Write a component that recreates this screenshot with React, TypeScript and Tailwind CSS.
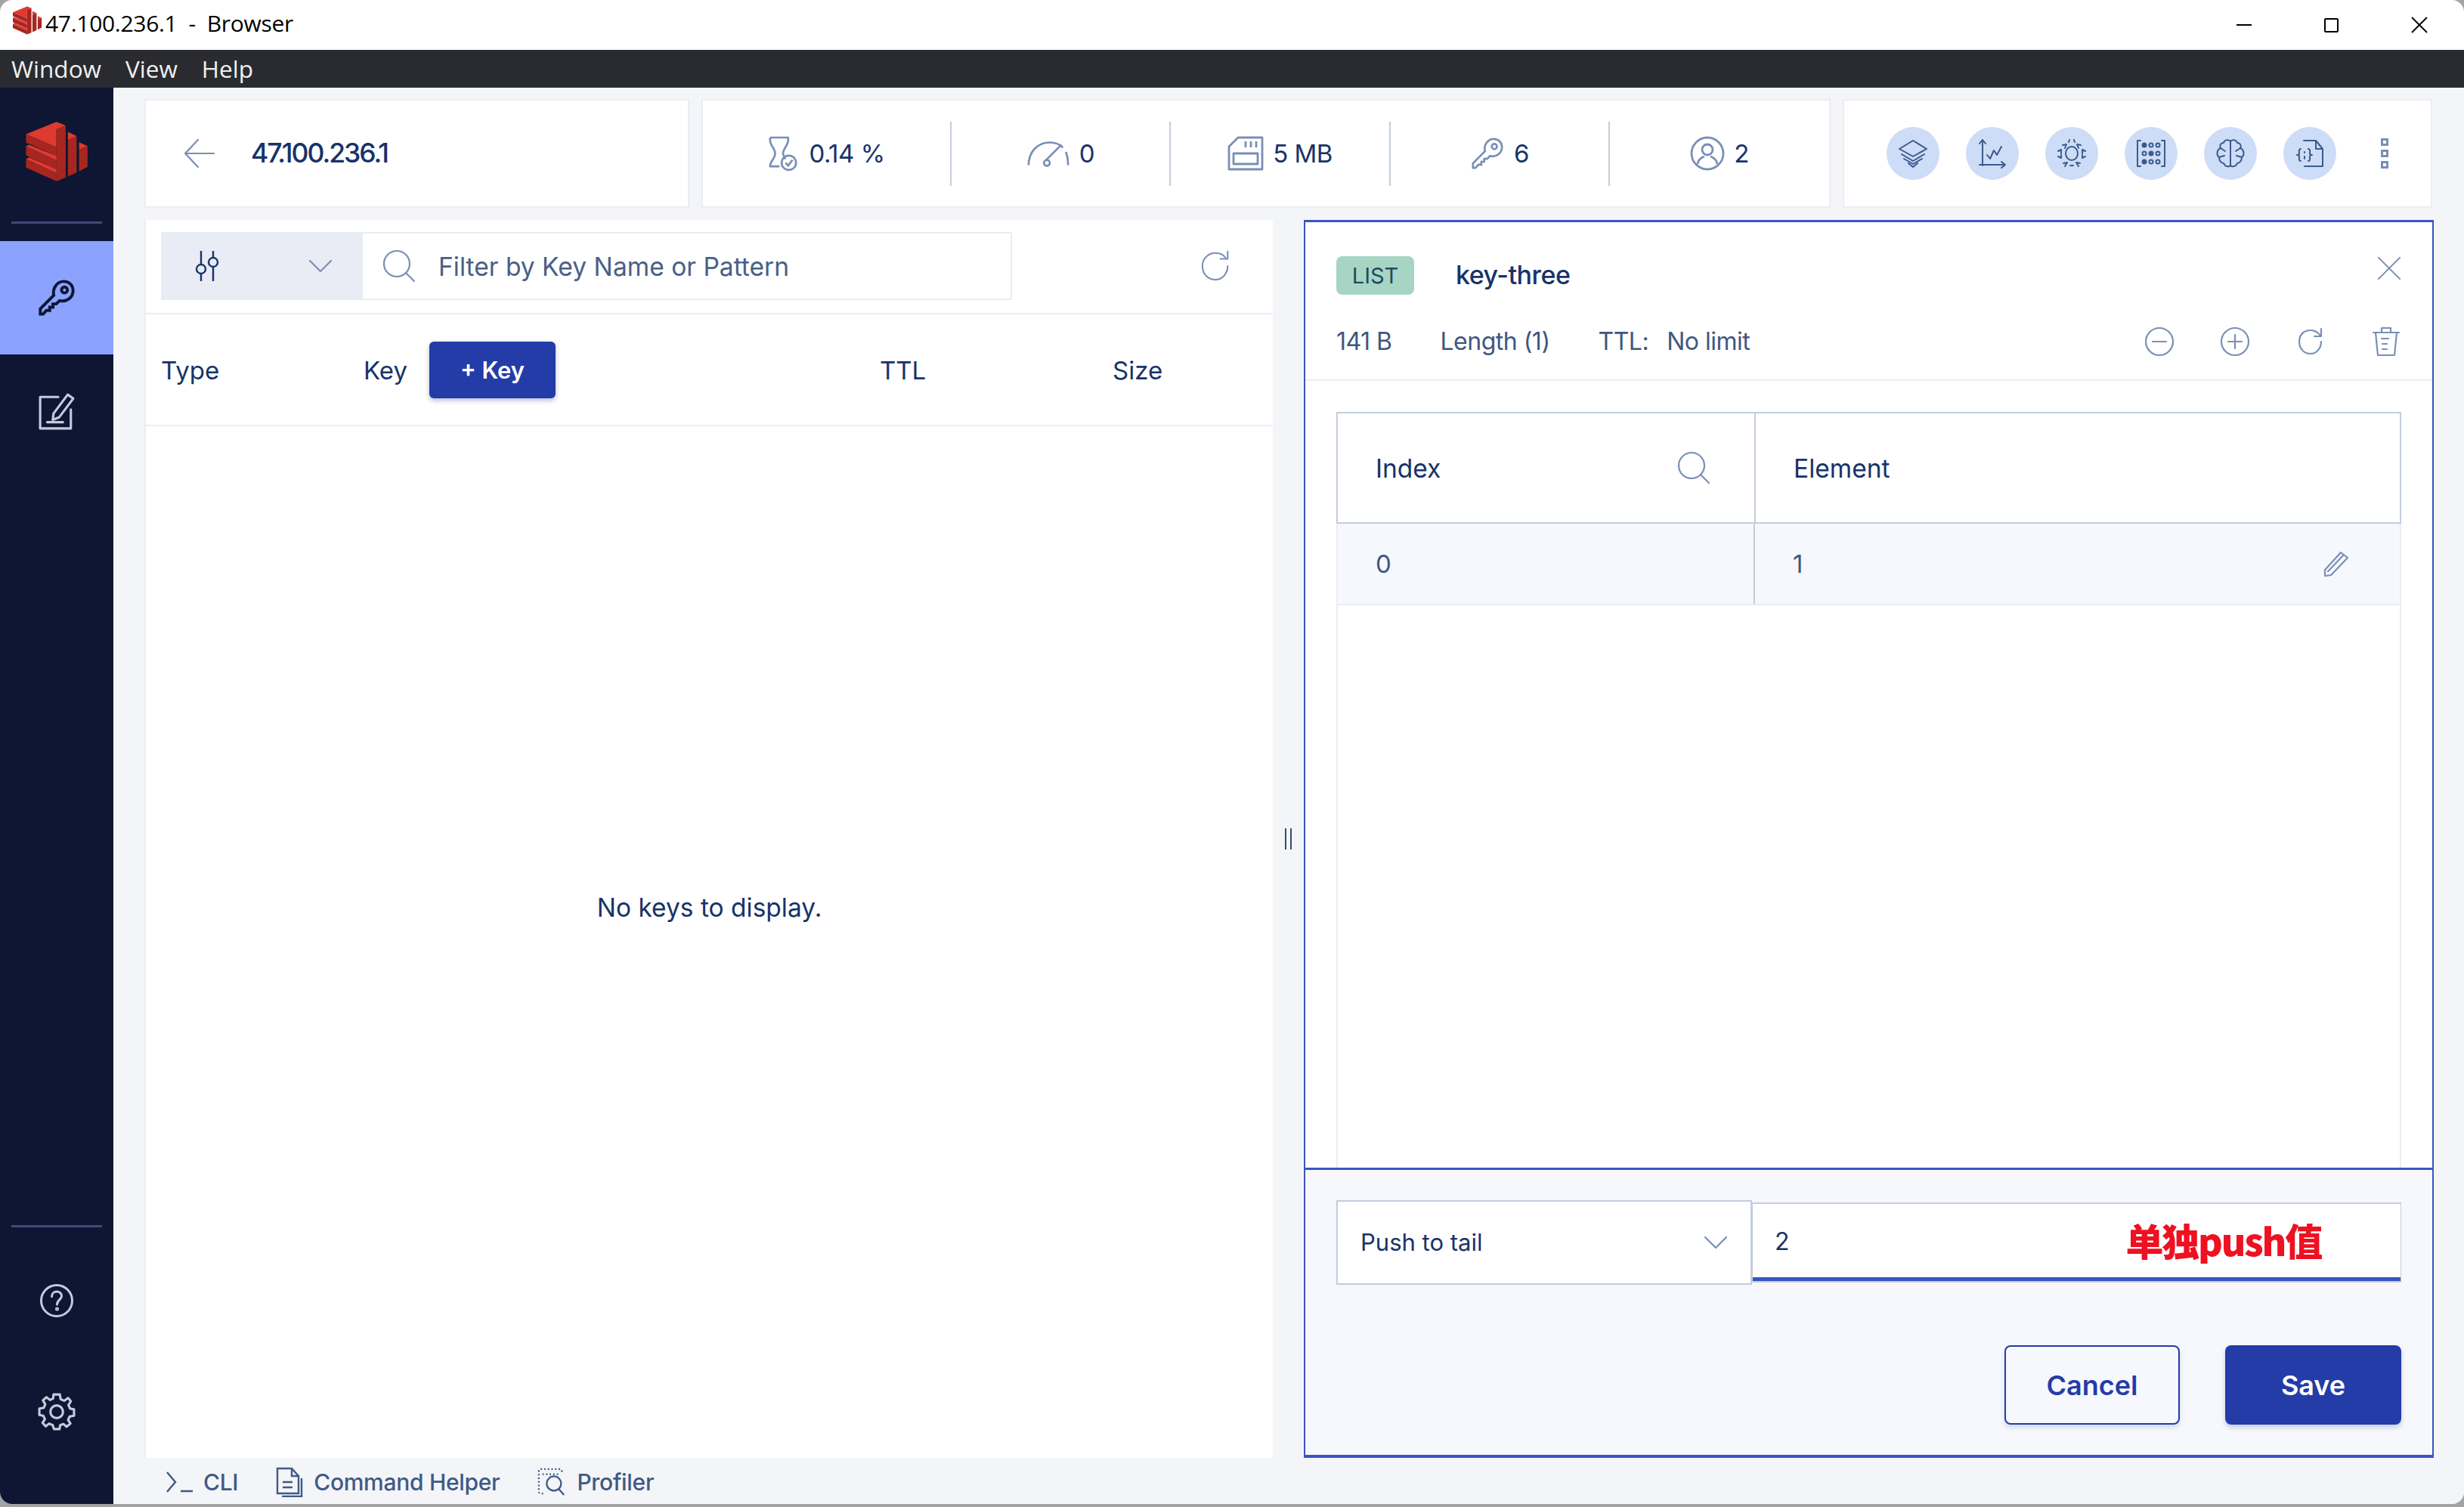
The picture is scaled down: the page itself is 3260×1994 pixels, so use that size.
import { ReactNode } from "react";

const thin = "fill-none stroke-[#7a8fb5] [stroke-width:2.2] [stroke-linecap:round] [stroke-linejoin:round]";
const stat = "fill-none stroke-[#7a8fb5] [stroke-width:2.8] [stroke-linejoin:round]";
const round = "fill-none stroke-[#3b5b8c] [stroke-width:2] [stroke-linecap:round] [stroke-linejoin:round]";
const side = "fill-none stroke-[#c3cbdd] [stroke-width:3] [stroke-linecap:round] [stroke-linejoin:round]";

function Logo({ className }: { className: string }) {
  return (
    <svg viewBox="95 118 262 252" className={className}>
      <path fill="#de3a2f" d="M100 172 225 122 263 137 225 153 225 226Z" />
      <path fill="#a82620" d="M225 153 263 137 263 350 225 366Z" />
      <path fill="#a82620" d="M100 172 225 226 225 262 112 212 100 208Z" />
      <path fill="#de3a2f" d="M100 222 112 216 225 262 225 280Z" />
      <path fill="#a82620" d="M100 222 225 280 225 316 112 266 100 258Z" />
      <path fill="#de3a2f" d="M100 275 112 268 225 316 225 332Z" />
      <path fill="#a82620" d="M100 275 225 332 225 366 100 310Z" />
      <path fill="#de3a2f" d="M272 163 308 180 272 196Z" />
      <path fill="#a82620" d="M272 196 308 180 308 330 272 346Z" />
      <path fill="#de3a2f" d="M318 206 353 221 318 236Z" />
      <path fill="#a82620" d="M318 236 353 221 353 307 318 325Z" />
    </svg>
  );
}

function KeyIcon({ className, stroke }: { className: string; stroke: string }) {
  return (
    <svg viewBox="0 0 48 48" className={`${className} ${stroke}`}>
      <path d="M4 44V37.5L20.5 21C18.6 13 24 4 32.5 4 39.5 4 44 9 44 15.5 44 24 35.5 29.5 27.5 27.5L23.5 31.5H19.5V35.5H15.5V39.5H11.5L7.5 44Z" />
      <circle cx="33.5" cy="14.5" r="3.6" />
    </svg>
  );
}

function Stat({ w, last, icon, children }: { w: string; last?: boolean; icon: ReactNode; children: ReactNode }) {
  return (
    <div className={`${w} h-[85px] flex items-center justify-center gap-[12px] ${last ? "" : "border-r-2 border-[#c3cddd]"}`}>
      {icon}
      <span className="text-[33px] pt-[2px] text-[#173369] tracking-[-0.5px]">{children}</span>
    </div>
  );
}

function Tool({ children }: { children: ReactNode }) {
  return (
    <div className="w-[70px] h-[70px] rounded-full bg-[#cddcf7] flex items-center justify-center">
      <svg viewBox="0 0 40 40" className={`w-[40px] h-[40px] ${round}`}>
        {children}
      </svg>
    </div>
  );
}

function Dot() {
  return <div className="w-[10px] h-[10px] border-[3px] border-[#7a8fb5]" />;
}

function Sidebar() {
  return (
    <div className="w-[150px] bg-[#0e1633] flex flex-col shrink-0">
      <div className="h-[180px] flex flex-col items-center">
        <Logo className="w-[88px] h-[84px] mt-[44px]" />
        <div className="w-[120px] h-[3px] bg-[#3d4a7d] mt-[52px]" />
      </div>
      <div className="h-[150px] mt-[23px] bg-[#8ba2ff] flex items-center justify-center">
        <KeyIcon className="w-[52px] h-[52px] [stroke-width:3.6] fill-none" stroke="stroke-[#0e1633]" />
      </div>
      <div className="h-[150px] flex items-center justify-center">
        <svg viewBox="0 0 48 48" className={`w-[50px] h-[50px] ${side}`}>
          <path d="M26 6H3V46H42V22" />
          <path d="M20 27 38 3 45 8 27 32 19 35Z" />
          <path d="M12 38H32" />
        </svg>
      </div>
      <div className="flex-1" />
      <div className="flex justify-center mb-[75px]">
        <div className="w-[120px] h-[3px] bg-[#3d4a7d]" />
      </div>
      <div className="flex justify-center mb-[100px]">
        <svg viewBox="0 0 44 44" className={`w-[44px] h-[44px] ${side}`}>
          <circle cx="22" cy="22" r="20.5" />
          <path d="M15.5 16.5C15.5 12.5 18.5 10 22 10 26 10 28.5 12.5 28.5 16 28.5 20.5 22.5 21 22.5 27" />
          <circle cx="22.5" cy="33" r="1" />
        </svg>
      </div>
      <div className="flex justify-center mb-[97px]">
        <svg viewBox="0 0 48 48" className={`w-[50px] h-[50px] ${side}`}>
          <circle cx="24" cy="24" r="8" />
          <path d="M20 2H28L29 8 33.5 10 38.5 6.5 42 10.5 39 15.5 41 20 46 21V29L40.5 30 38.5 34.5 41.5 39 36.5 43 32.5 39.5 28.5 41 27.5 46H20.5L19 41 14.5 39 10 42.5 6 38 9 33.5 7 29 2 28V20L7.5 19 9.5 14.5 6.5 9.5 11 5.5 15.5 9 19.5 7Z" />
        </svg>
      </div>
    </div>
  );
}

function TopCards() {
  return (
    <div className="flex gap-[16px] h-[144px]">
      <div className="w-[721px] bg-white border-2 border-[#ebedf4] flex items-center pl-[49px] gap-[46px]">
        <svg viewBox="0 0 44 44" className={`w-[44px] h-[44px] ${thin}`}>
          <path d="M41 22H4M20 4 3 22 20 40" />
        </svg>
        <span className="text-[35.5px] font-medium text-[#173369] tracking-[-2px]">47.100.236.1</span>
      </div>
      <div className="w-[1494px] bg-white border-2 border-[#ebedf4] flex items-center">
        <Stat
          w="w-[329px]"
          icon={
            <svg viewBox="0 0 44 48" className={`w-[42px] h-[46px] ${stat}`}>
              <path d="M3 2H28V6C28 13 21 17 21 24 21 27 23 29 24 32M3 2V6C3 13 10 17 10 24 10 31 3 35 3 42H16" />
              <circle cx="29" cy="37" r="10" />
              <path d="M24.5 37 28 41 34 33" />
            </svg>
          }
        >
          0.14 %
        </Stat>
        <Stat
          w="w-[290px]"
          icon={
            <svg viewBox="0 0 60 40" className={`w-[58px] h-[40px] ${stat}`}>
              <path d="M3 36C3 18 15 5 32 5 40 5 46 8 50 12M54 18C56 23 57 29 57 36" />
              <path d="M26 30 48 8" />
              <circle cx="28" cy="33" r="4" />
            </svg>
          }
        >
          0
        </Stat>
        <Stat
          w="w-[291px]"
          icon={
            <svg viewBox="0 0 48 46" className={`w-[48px] h-[46px] ${stat}`}>
              <path d="M14 2H46V44H2V14Z" />
              <path d="M8 23H40V37H8Z" />
              <path d="M24 7V15M31 7V15M38 7V15" />
            </svg>
          }
        >
          5 MB
        </Stat>
        <Stat w="w-[290px]" icon={<KeyIcon className="w-[46px] h-[46px] fill-none [stroke-width:2.8]" stroke="stroke-[#7a8fb5]" />}>
          6
        </Stat>
        <Stat
          w="w-[290px]"
          last
          icon={
            <svg viewBox="0 0 46 46" className={`w-[46px] h-[46px] ${stat}`}>
              <circle cx="23" cy="23" r="21" />
              <circle cx="23" cy="18" r="7" />
              <path d="M10 37C11 30 16 28 19 27M36 37C35 30 30 28 27 27" />
            </svg>
          }
        >
          2
        </Stat>
      </div>
      <div className="w-[780px] bg-white border-2 border-[#ebedf4] flex items-center pl-[56px] gap-[35px]">
        <Tool>
          <path d="M20 3 38 14 20 24 2 14Z" />
          <path d="M5 21 20 30 35 21M8 27 20 34 32 27M14 33 20 38 26 33" />
        </Tool>
        <Tool>
          <path d="M7 2V36M3 7 7 2 11 7M3 35H37M32 31 37 35 32 39" />
          <path d="M13 22 17 27 22 16 26 22 32 11" />
        </Tool>
        <Tool>
          <ellipse cx="20" cy="20" rx="8" ry="9" />
          <path d="M16 5 17 2M24 5 23 2M8 9 13 8 11 13M32 9 27 8 29 13M2 17 6 15 6 20M38 17 34 15 34 20M2 24 6 26 6 22M38 24 34 26 34 22M9 33 14 32 11 37M31 33 26 32 29 37M18 36H22" />
        </Tool>
        <Tool>
          <path d="M6 3H2V37H6M34 3H38V37H34" />
          <circle cx="11" cy="9" r="2.5" fill="#3b5b8c" />
          <circle cx="20" cy="9" r="2.5" />
          <circle cx="29" cy="9" r="2.5" />
          <circle cx="11" cy="20" r="2.5" />
          <circle cx="20" cy="20" r="2.5" fill="#3b5b8c" />
          <circle cx="29" cy="20" r="2.5" />
          <circle cx="11" cy="31" r="2.5" fill="#3b5b8c" />
          <circle cx="20" cy="31" r="2.5" />
          <circle cx="29" cy="31" r="2.5" />
        </Tool>
        <Tool>
          <path d="M20 4V36M20 4C17 1 12 2 11 6 7 6 5 10 7 13 2 15 1 22 5 25 5 30 8 33 11 33 13 38 18 38 20 36M20 4C23 1 28 2 29 6 33 6 35 10 33 13 38 15 39 22 35 25 35 30 32 33 29 33 27 38 22 38 20 36" />
          <path d="M7 13 13 17M33 13 27 17M5 25 12 23M35 25 28 23" />
        </Tool>
        <Tool>
          <path d="M12 3H28L37 14V37H13M28 3V14H37" />
          <path d="M8 14C5 14 6 19 6 20 6 22 3 22 3 22 3 22 6 22 6 24 6 26 5 30 8 30M18 14C21 14 20 19 20 20 20 22 23 22 23 22 23 22 20 22 20 24 20 26 21 30 18 30M13 18V19M13 24V27" />
        </Tool>
        <div className="flex flex-col gap-[5px] ml-[24px]">
          <Dot />
          <Dot />
          <Dot />
        </div>
      </div>
    </div>
  );
}

function KeysPanel() {
  return (
    <div className="w-[1493px] bg-white border-l-2 border-[#ebedf4] flex flex-col shrink-0 text-[#173369]">
      <div className="h-[125px] border-b-2 border-[#ebedf4] pl-[20px] pt-[16px] pr-[52px] flex items-start">
        <div className="w-[267px] h-[90px] bg-[#e9ecf5] flex items-center pl-[44px] pr-[40px] justify-between">
          <svg viewBox="0 0 34 44" className="w-[34px] h-[44px] fill-none stroke-[#173369] [stroke-width:2.4]">
            <path d="M9 2V20M9 32V42M25 2V10M25 24V42" />
            <circle cx="9" cy="26" r="6" />
            <circle cx="25" cy="17" r="6" />
          </svg>
          <svg viewBox="0 0 32 20" className={`w-[32px] h-[20px] ${thin}`}>
            <path d="M2 3 16 17 30 3" />
          </svg>
        </div>
        <div className="w-[859px] h-[90px] border-y-2 border-r-2 border-[#ebedf4] flex items-center pl-[26px] gap-[30px]">
          <svg viewBox="0 0 44 44" className={`w-[44px] h-[44px] ${thin}`}>
            <circle cx="19" cy="19" r="17" />
            <path d="M31 31 42 42" />
          </svg>
          <span className="text-[33.6px] pt-[2px] text-[#4a6086]">Filter by Key Name or Pattern</span>
        </div>
        <div className="flex-1 flex justify-end items-center h-[90px]">
          <svg viewBox="0 0 44 44" className={`w-[42px] h-[42px] mr-[2px] ${thin}`}>
            <path d="M38 22C38 32 31 41 21 41 11 41 3 33 3 22 3 12 11 4 21 4 27 4 33 7 36 12" />
            <path d="M38 2V12H28" />
          </svg>
        </div>
      </div>
      <div className="h-[148px] border-b-2 border-[#ebedf4] flex items-center pl-[20px] text-[33px]">
        <span className="w-[268px] pt-[4px]">Type</span>
        <span className="w-[87px] pt-[4px]">Key</span>
        <div className="w-[167px] h-[75px] bg-[#233ca8] rounded-[6px] shadow-[0_3px_6px_rgba(20,40,120,0.3)] text-[31px] pt-[2px] text-white font-semibold flex items-center justify-center">
          + Key
        </div>
        <span className="ml-[429px] w-[308px] pt-[4px]">TTL</span>
        <span className="pt-[4px]">Size</span>
      </div>
      <div className="flex-1 flex items-center justify-center pb-[90px] text-[33.5px]">No keys to display.</div>
    </div>
  );
}

function DetailsPanel() {
  const act = `w-[40px] h-[40px] ${thin}`;
  return (
    <div className="flex-1 bg-white border-x-2 border-t-[3px] border-b-[4px] border-[#3a54c0] flex flex-col text-[#173369]">
      <div className="h-[210px] border-b-2 border-[#ebedf4] pl-[41px] pr-[41px] flex flex-col shrink-0">
        <div className="flex items-center mt-[44px]">
          <div className="w-[103px] h-[51px] rounded-[8px] bg-[#a7d5c4] text-[29px] text-[#234a5c] flex items-center justify-center">LIST</div>
          <span className="ml-[55px] mb-[2px] text-[34px] font-medium tracking-[-0.5px]">key-three</span>
          <svg viewBox="0 0 34 34" className={`ml-auto mb-[19px] w-[32px] h-[32px] ${thin}`}>
            <path d="M2 2 32 32M32 2 2 32" />
          </svg>
        </div>
        <div className="flex items-center mt-[37px] text-[32px] text-[#3f577f] tracking-[-0.5px]">
          <span>141 B</span>
          <span className="ml-[64px]">Length (1)</span>
          <span className="ml-[64px]">TTL:</span>
          <span className="ml-[24px]">No limit</span>
          <div className="ml-auto flex items-center gap-[60px]">
            <svg viewBox="0 0 40 40" className={act}>
              <circle cx="20" cy="20" r="18" />
              <path d="M11 20H29" />
            </svg>
            <svg viewBox="0 0 40 40" className={act}>
              <circle cx="20" cy="20" r="18" />
              <path d="M11 20H29M20 11V29" />
            </svg>
            <svg viewBox="0 0 40 40" className={act}>
              <path d="M34 20C34 29 28 36 20 36 11 36 5 29 5 20 5 11 11 5 20 5 25 5 30 8 33 12" />
              <path d="M34 3V13H25" />
            </svg>
            <svg viewBox="0 0 40 40" className={act}>
              <path d="M3 8H37M14 8V2H26V8M6 8 9 38H31L34 8M14 16H23M15 23H21M15 30H21" />
            </svg>
          </div>
        </div>
      </div>
      <div className="flex-1 px-[41px] pt-[41px]">
        <div className="h-full border-x-2 border-[#ebedf4] flex flex-col">
          <div className="h-[148px] -mx-[2px] border-2 border-[#c3cddd] flex text-[33.5px] items-center">
            <div className="w-[553px] h-full border-r-2 border-[#c3cddd] flex items-center justify-between pl-[50px] pr-[58px]">
              <span className="pt-[2px]">Index</span>
              <svg viewBox="0 0 44 44" className={`w-[44px] h-[44px] ${thin}`}>
                <circle cx="19" cy="19" r="17" />
                <path d="M31 31 42 42" />
              </svg>
            </div>
            <span className="pl-[50px] pt-[2px]">Element</span>
          </div>
          <div className="h-[108px] bg-[#f6f8fd] border-b-2 border-[#ebedf4] flex items-center text-[33px] text-[#3f577f]">
            <div className="w-[552px] h-full border-r-2 border-[#c3cddd] flex items-center pl-[50px] pt-[2px]">0</div>
            <span className="pl-[50px] pt-[2px]">1</span>
            <svg viewBox="0 0 36 36" className={`ml-auto mr-[66px] w-[36px] h-[36px] ${thin}`}>
              <path d="M3 26 24 3 33 10 11 33 3 34ZM7 28 28 6" />
            </svg>
          </div>
        </div>
      </div>
      <div className="h-[380px] shrink-0 bg-[#f6f8fd] border-t-[3px] border-[#3a54c0] px-[41px] pt-[40px]">
        <div className="flex items-center">
          <div className="w-[550px] h-[112px] bg-white border-2 border-[#c3cddd] flex items-center justify-between pl-[30px] pr-[30px] text-[31px]">
            <span>Push to tail</span>
            <svg viewBox="0 0 32 20" className={`w-[32px] h-[20px] ${thin}`}>
              <path d="M2 3 16 17 30 3" />
            </svg>
          </div>
          <div className="flex-1 h-[106px] bg-white border-x border-t-2 border-b-2 border-[#c3cddd] flex flex-col">
            <div className="flex-1 flex items-center pl-[29px] text-[32px]">
              <span className="pt-[2px]">2</span>
              <span className="ml-[445px] mb-[4px] text-[50px] leading-none font-black text-[#ee1122] [font-family:'Noto_Sans_CJK_SC','Noto_Sans',sans-serif] tracking-[-2.2px]">单独push值</span>
            </div>
            <div className="h-[5px] bg-[#3a54c0]" />
          </div>
        </div>
        <div className="flex justify-end gap-[60px] mt-[80px] text-[36px] font-semibold">
          <div className="w-[232px] h-[105px] rounded-[8px] border-2 border-[#233ca8] text-[#233ca8] shadow-[0_4px_6px_rgba(20,40,120,0.15)] flex items-center justify-center">
            Cancel
          </div>
          <div className="w-[233px] h-[105px] rounded-[8px] bg-[#233ca8] text-white shadow-[0_4px_6px_rgba(20,40,120,0.2)] flex items-center justify-center">
            Save
          </div>
        </div>
      </div>
    </div>
  );
}

function BottomBar() {
  return (
    <div className="h-[61px] shrink-0 flex items-center pl-[28px] pt-[3px] text-[30px] font-medium text-[#3f5a85] tracking-[-0.3px]">
      <svg viewBox="0 0 36 30" className="w-[36px] h-[30px] fill-none stroke-[#3f5a85] [stroke-width:2.4]">
        <path d="M2 2 13 15 2 28M20 27H36" />
      </svg>
      <span className="ml-[14px]">CLI</span>
      <svg viewBox="0 0 36 40" className="ml-[50px] w-[36px] h-[40px] fill-none stroke-[#3f5a85] [stroke-width:2.4]">
        <path d="M2 2H21L30 12V35H2ZM21 2V12H30M34 15V39H8M9 20H22M9 27H22" />
      </svg>
      <span className="ml-[14px]">Command Helper</span>
      <svg viewBox="0 0 40 40" className="ml-[50px] w-[38px] h-[38px] fill-none stroke-[#3f5a85] [stroke-width:2.4]">
        <path d="M8 36H5C3 36 2 35 2 33V5C2 3 3 2 5 2H31C33 2 34 3 34 5V8M7 9H30" strokeDasharray="2 3" />
        <circle cx="23" cy="22" r="10" />
        <path d="M30 30 37 38" />
      </svg>
      <span className="ml-[14px]">Profiler</span>
    </div>
  );
}

export default function App() {
  return (
    <div className="w-[3260px] h-[1994px] bg-[#a3a3a3] overflow-hidden [font-family:Inter,sans-serif]">
      <div className="h-[1990px] rounded-[16px] overflow-hidden bg-white flex flex-col">
        <div className="h-[66px] shrink-0 flex items-center pl-[15px] pr-[48px] text-[30px] text-black [font-family:'Open_Sans',sans-serif]">
          <Logo className="w-[42px] h-[38px] mb-[12px]" />
          <span className="ml-[3px] mb-[6px] tracking-[-0.3px]">47.100.236.1&nbsp; - &nbsp;Browser</span>
          <div className="ml-auto flex items-center">
            <div className="w-[20px] h-[2px] bg-black" />
            <div className="ml-[96px] w-[19px] h-[19px] border-2 border-black rounded-[2px]" />
            <svg viewBox="0 0 22 22" className="ml-[96px] w-[22px] h-[22px] fill-none stroke-black [stroke-width:1.8]">
              <path d="M1 1 21 21M21 1 1 21" />
            </svg>
          </div>
        </div>
        <div className="h-[50px] shrink-0 bg-[#2a2b30] flex items-center pl-[15px] gap-[32px] text-[31.5px] text-[#f0f0f0] [font-family:'Open_Sans',sans-serif]">
          <span>Window</span>
          <span>View</span>
          <span>Help</span>
        </div>
        <div className="flex-1 flex min-h-0">
          <Sidebar />
          <div className="flex-1 bg-[#f4f5f8] pl-[41px] pt-[15px] pr-[40px] flex flex-col">
            <TopCards />
            <div className="flex mt-[16px] h-[1638px]">
              <KeysPanel />
              <div className="w-[41px] flex items-center justify-center">
                <div className="w-[9px] h-[28px] border-x-2 border-[#3b4a6b]" />
              </div>
              <DetailsPanel />
            </div>
            <BottomBar />
          </div>
        </div>
      </div>
    </div>
  );
}
